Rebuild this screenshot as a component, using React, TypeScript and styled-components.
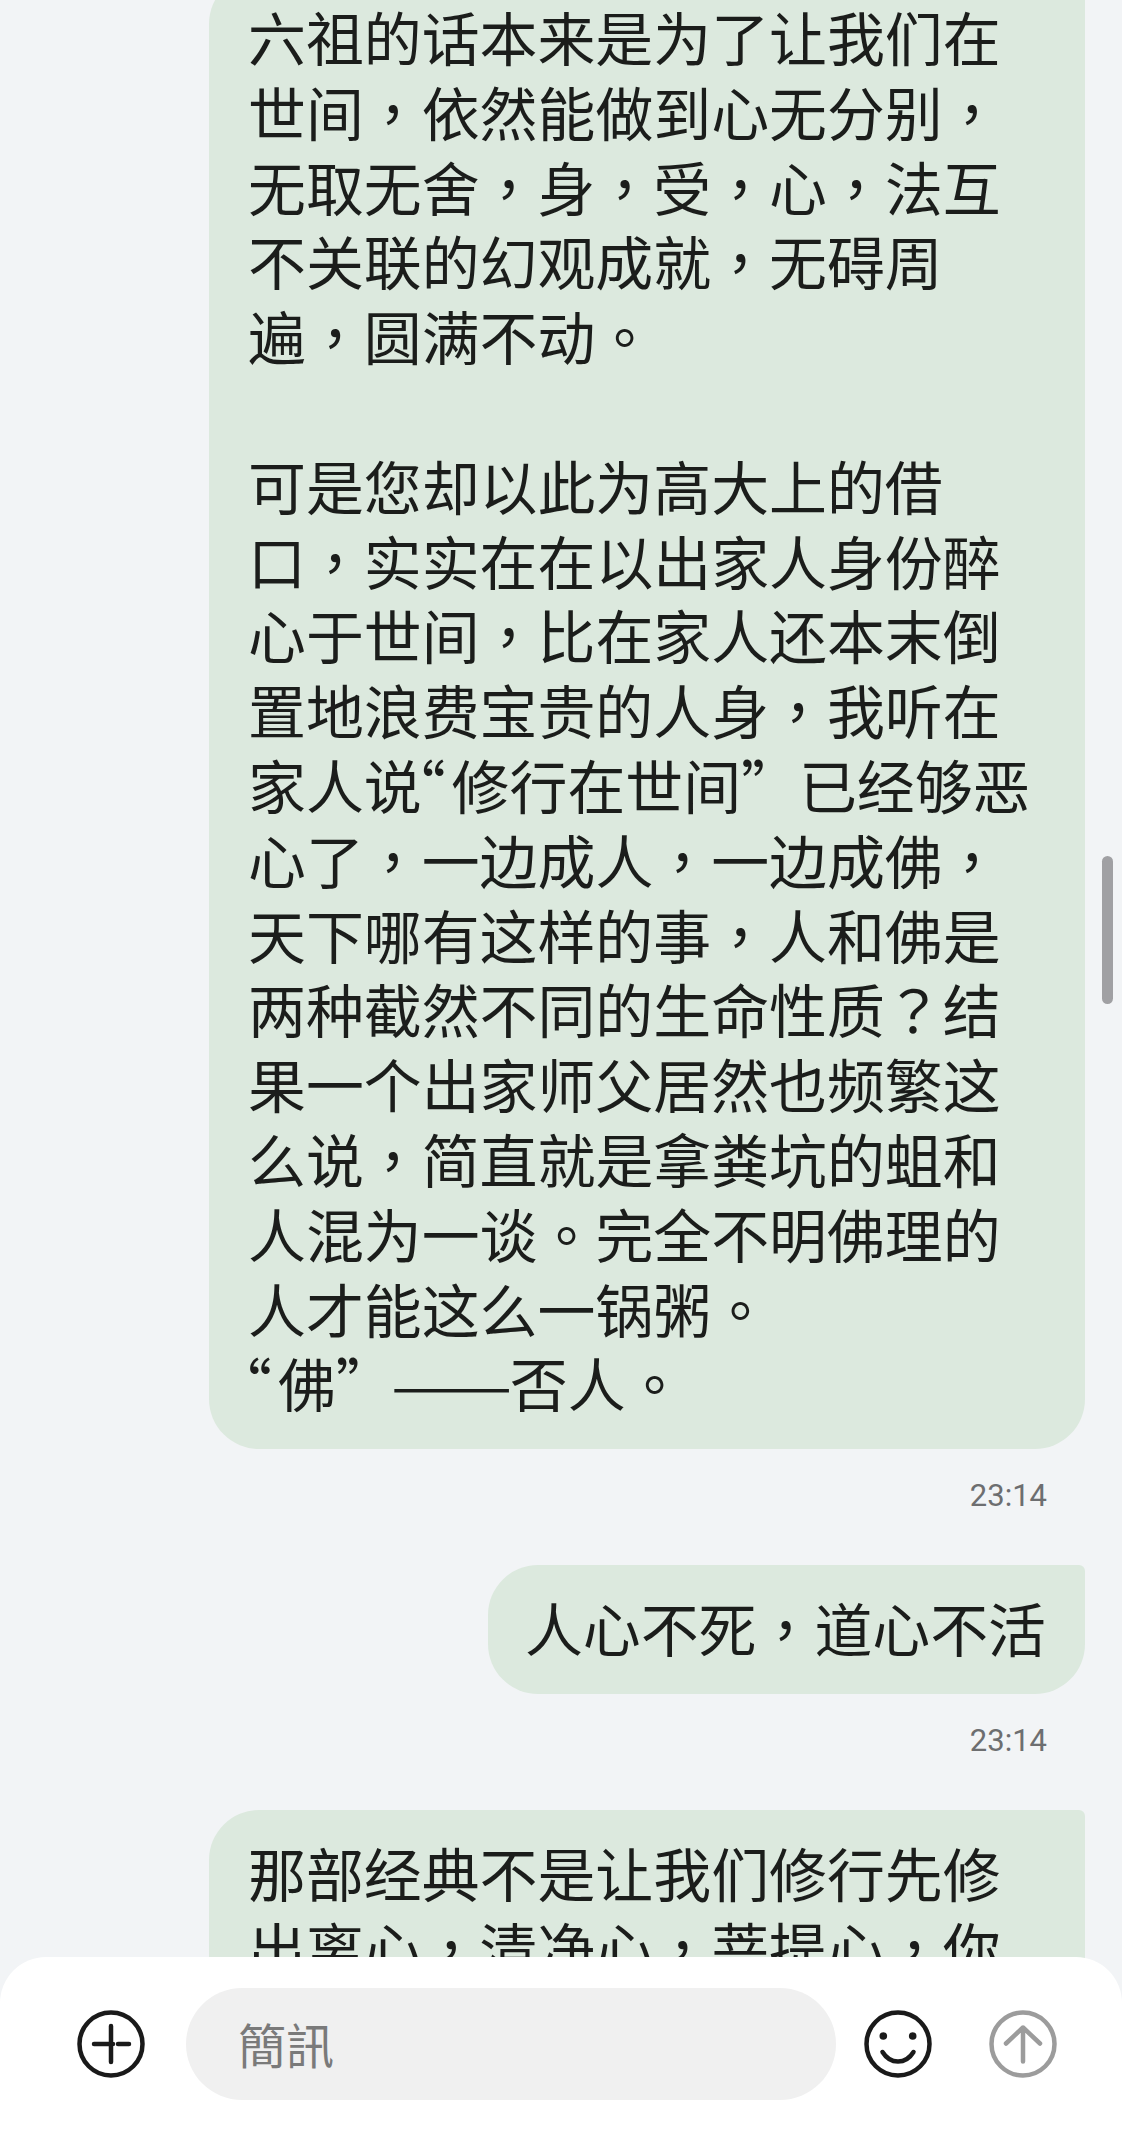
import styled, { createGlobalStyle } from 'styled-components'

const GlobalStyle = createGlobalStyle`
	html, body {
		margin: 0;
		padding: 0;
		background: #f2f4f6;
	}
	* {
		box-sizing: border-box;
	}
`

const Screen = styled.div`
	position: relative;
	width: 1122px;
	height: 2132px;
	overflow: hidden;
	background: #f2f4f6;
	font-family: 'Roboto', sans-serif;
`

const Thread = styled.div`
	display: flex;
	flex-direction: column;
	align-items: flex-end;
	margin-top: -26px;
	padding-right: 37px;
`

const Bubble = styled.div<{ $wide?: boolean }>`
	width: ${({ $wide }) => ($wide ? '876px' : 'auto')};
	padding: 25px 39px 29px ${({ $wide }) => ($wide ? '39px' : '37px')};
	border-radius: 50px 6px 50px 50px;
	background: #dce9de;
	color: #1b1d1b;
	font-family: 'Noto Sans CJK SC', sans-serif;
	font-size: 57.9px;
	line-height: 74.8px;
	white-space: pre-line;
`

// centred punctuation, as the phone's font draws it
const Punct = styled.span`
	font-family: 'Noto Sans CJK TC', sans-serif;
`

const OpenQuote = styled.span`
	margin-left: -34px;
	margin-right: 6px;
`

const Dash = styled.span`
	display: inline-block;
	margin-left: -3px;
	margin-right: 22px;
	transform: scaleX(1.25);
	transform-origin: left center;
`

const Time = styled.div`
	align-self: flex-end;
	margin: 32px 0 54px;
	padding-right: 38px;
	color: #6d6e70;
	font-size: 31px;
	line-height: 30px;
`

const Scrollbar = styled.div`
	position: absolute;
	top: 856px;
	right: 9px;
	width: 11px;
	height: 148px;
	border-radius: 6px;
	background: #a0a0a3;
`

const Composer = styled.div`
	position: absolute;
	left: 0;
	right: 0;
	bottom: 0;
	height: 175px;
	display: flex;
	align-items: flex-start;
	padding: 31px 0 0 77px;
	border-radius: 46px 46px 0 0;
	background: #ffffff;
`

const IconButton = styled.div<{ $gap: number; $color?: string }>`
	flex: none;
	width: 68px;
	height: 112px;
	margin-right: ${({ $gap }) => $gap}px;
	display: flex;
	align-items: center;
	color: ${({ $color }) => $color || '#1a1a1a'};
`

const MessageInput = styled.div`
	flex: none;
	width: 650px;
	height: 112px;
	margin-right: 28px;
	padding: 0 0 3px 52px;
	display: flex;
	align-items: center;
	border-radius: 56px;
	background: #f0f0f0;
	color: #7a7a7a;
	font-family: 'Noto Sans CJK TC', sans-serif;
	font-size: 48px;
`

const PlusIcon = () => (
	<svg width="68" height="68" viewBox="0 0 68 68" fill="none" stroke="currentColor" strokeWidth="4.5" strokeLinecap="round">
		<circle cx="34" cy="34" r="31.5" />
		<path d="M17 34h19M41 34h11M34 16v36" />
	</svg>
)

const SmileIcon = () => (
	<svg width="68" height="68" viewBox="0 0 68 68" fill="none" stroke="currentColor" strokeWidth="4.5" strokeLinecap="round">
		<circle cx="34" cy="34" r="31.5" />
		<circle cx="19.3" cy="26" r="3.8" fill="currentColor" stroke="none" />
		<circle cx="48.7" cy="26" r="3.8" fill="currentColor" stroke="none" />
		<path d="M18.5 42c4 6.500 9.500 9.500 15.500 9.500s11.500-3 15.500-9.500" />
	</svg>
)

const SendIcon = () => (
	<svg width="68" height="68" viewBox="0 0 68 68" fill="none" stroke="currentColor" strokeWidth="4.5" strokeLinecap="round" strokeLinejoin="round">
		<circle cx="34" cy="34" r="31.5" />
		<path d="M34 51.500V17.500M17 33.500l17-16 17 16" />
	</svg>
)

const longMessage = `六祖的话本来是为了让我们在
世间，依然能做到心无分别，
无取无舍，身，受，心，法互
不关联的幻观成就，无碍周
遍，圆满不动。

可是您却以此为高大上的借
口，实实在在以出家人身份醉
心于世间，比在家人还本末倒
置地浪费宝贵的人身，我听在
家人说“修行在世间”已经够恶
心了，一边成人，一边成佛，
天下哪有这样的事，人和佛是
两种截然不同的生命性质？结
果一个出家师父居然也频繁这
么说，简直就是拿粪坑的蛆和
人混为一谈。完全不明佛理的
人才能这么一锅粥。
“佛”——否人。`

const lastMessage = `那部经典不是让我们修行先修
出离心，清净心，菩提心，你`

const renderMessage = (text: string) =>
	text.split(/([，。？“]|——)/).map((part, i) => {
		if (part === '“') return <OpenQuote key={i}>{part}</OpenQuote>
		if (part === '——') return <Dash key={i}>{part}</Dash>
		if (part === '，' || part === '。' || part === '？') return <Punct key={i}>{part}</Punct>
		return part
	})

const App = () => (
	<Screen>
		<GlobalStyle />
		<Thread>
			<Bubble $wide>{renderMessage(longMessage)}</Bubble>
			<Time>23:14</Time>
			<Bubble>{renderMessage('人心不死，道心不活')}</Bubble>
			<Time>23:14</Time>
			<Bubble $wide>{renderMessage(lastMessage)}</Bubble>
		</Thread>
		<Scrollbar />
		<Composer>
			<IconButton $gap={41}>
				<PlusIcon />
			</IconButton>
			<MessageInput>簡訊</MessageInput>
			<IconButton $gap={57}>
				<SmileIcon />
			</IconButton>
			<IconButton $gap={0} $color="#9c9c9c">
				<SendIcon />
			</IconButton>
		</Composer>
	</Screen>
)

export default App
